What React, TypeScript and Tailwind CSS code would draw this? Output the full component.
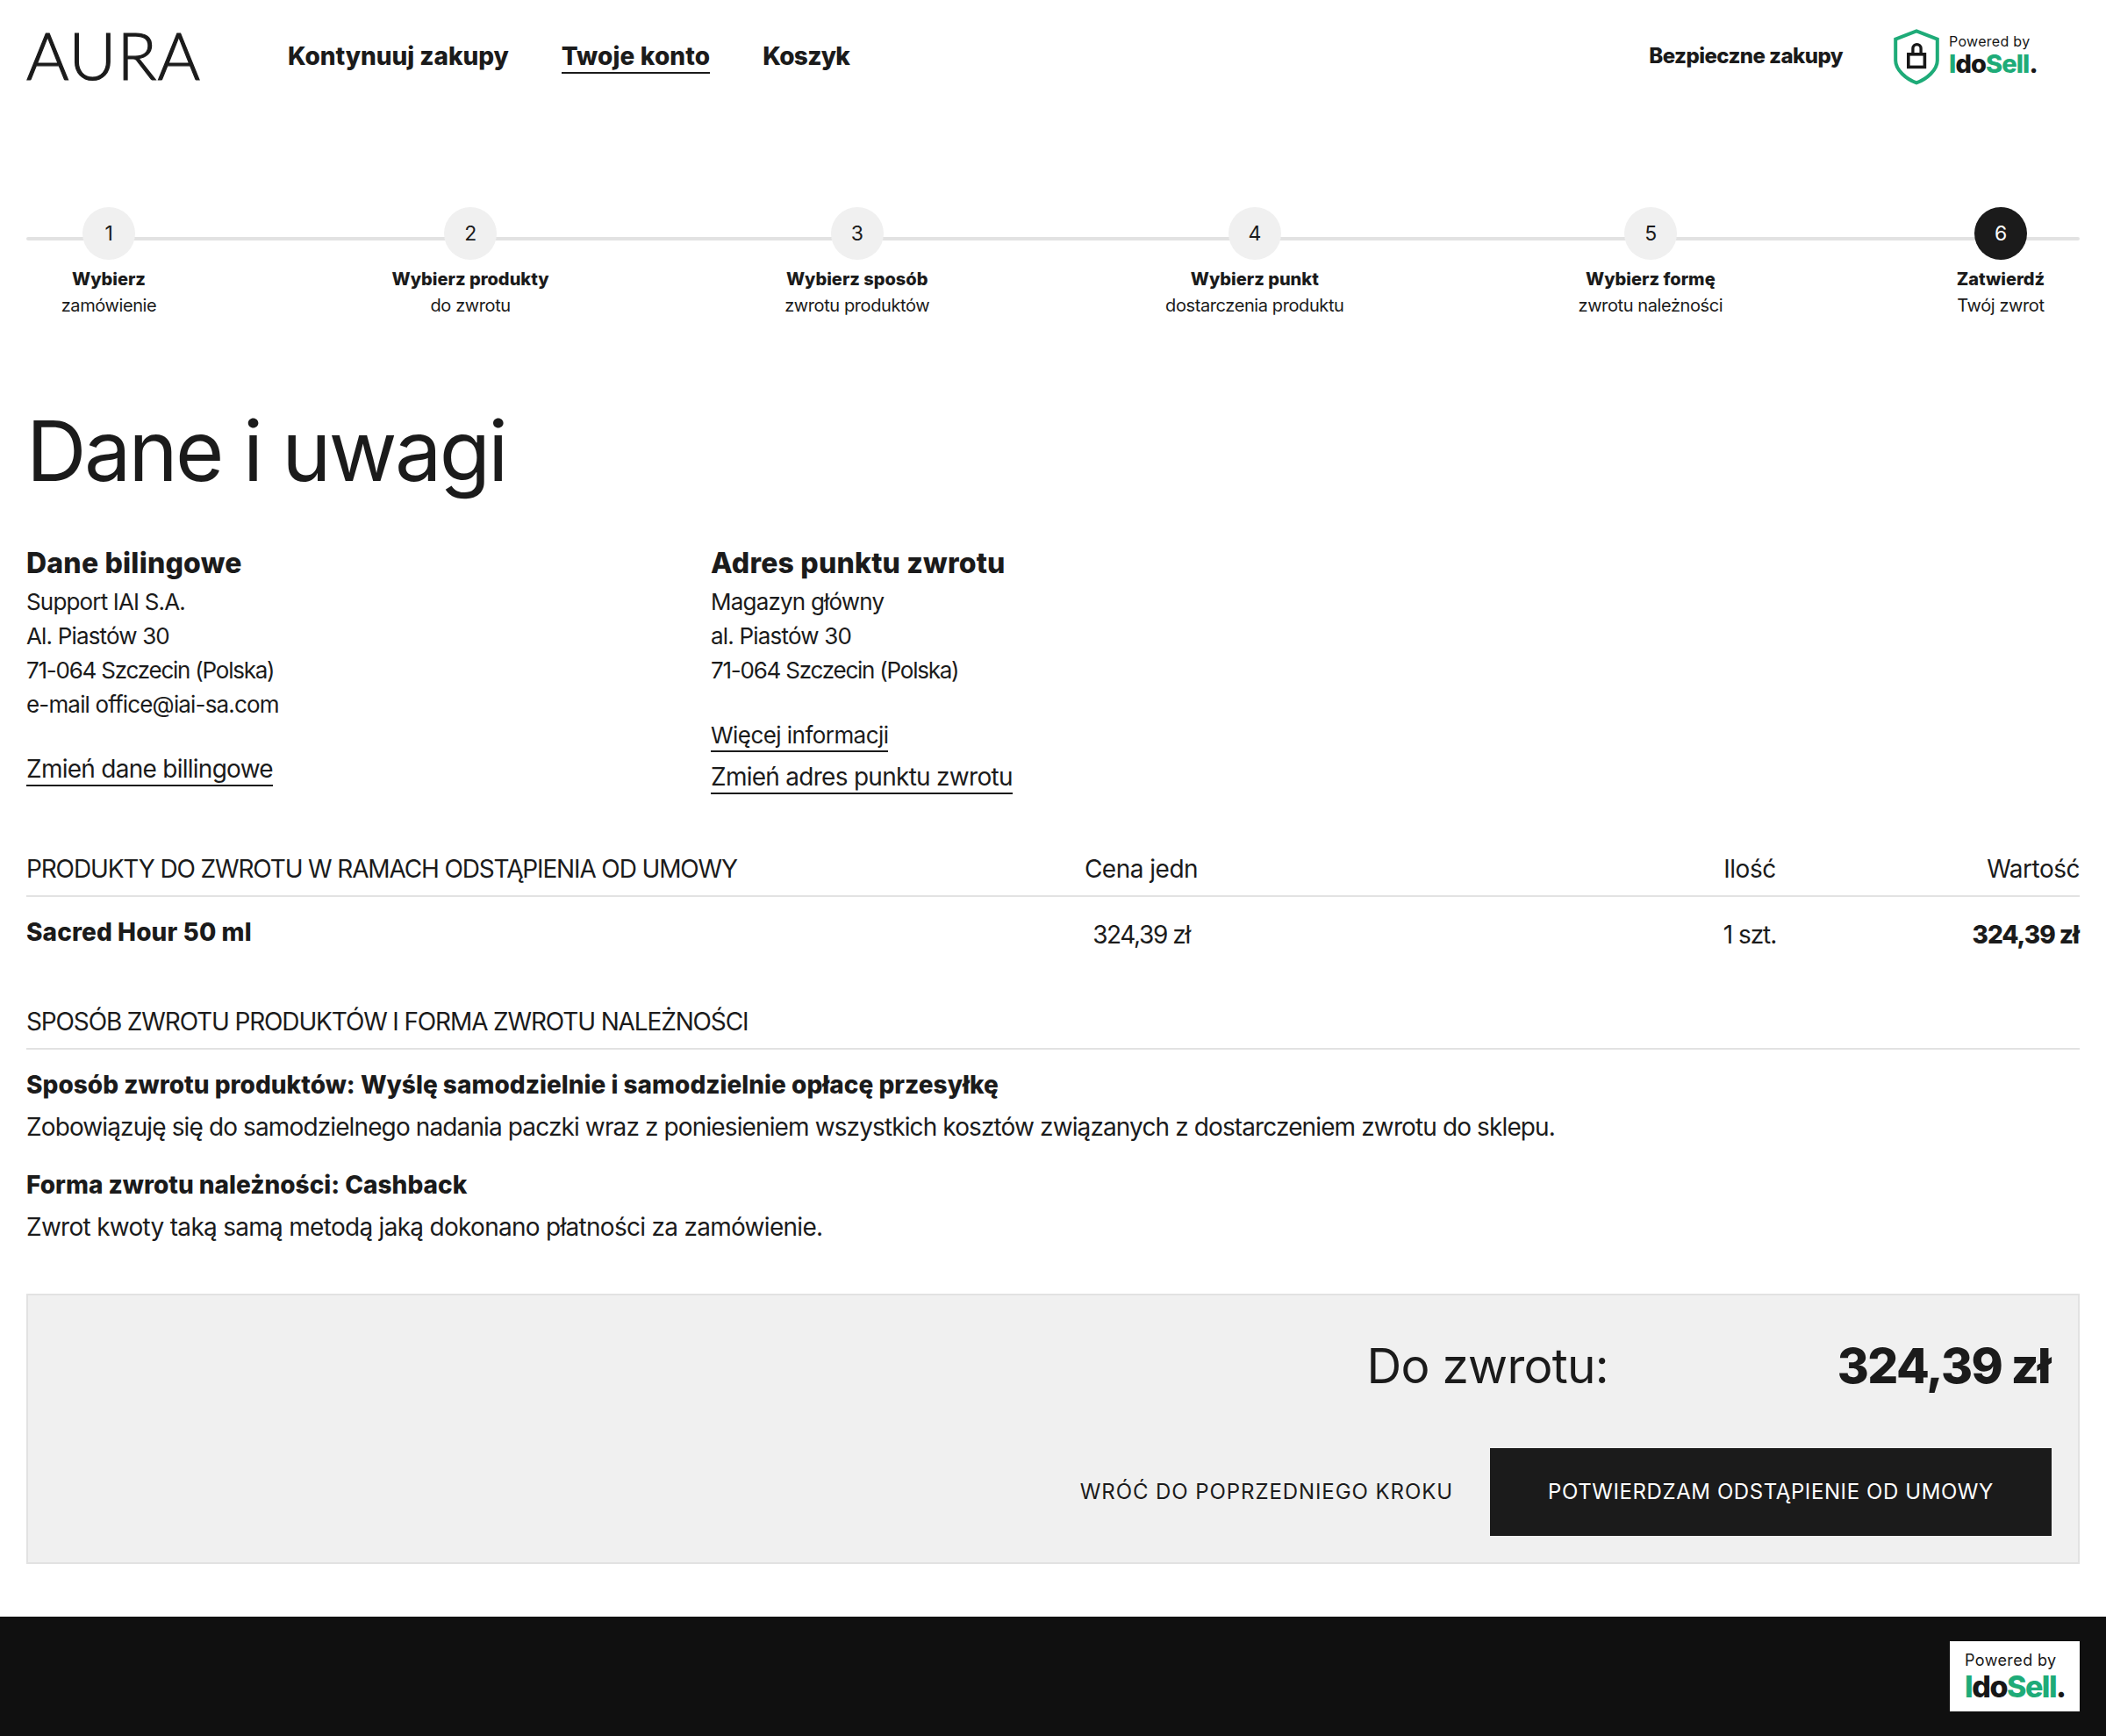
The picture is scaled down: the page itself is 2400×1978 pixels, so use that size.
import clsx from "clsx";

const steps = [
  { title: "Wybierz", text: "zamówienie", width: "w-[188px]" },
  { title: "Wybierz produkty", text: "do zwrotu", width: "w-[259px]" },
  { title: "Wybierz sposób", text: "zwrotu produktów", width: "w-[245px]" },
  { title: "Wybierz punkt", text: "dostarczenia produktu", width: "w-[284px]" },
  { title: "Wybierz formę", text: "zwrotu należności", width: "w-[241px]" },
  { title: "Zatwierdź", text: "Twój zwrot", width: "w-[180px]" },
];

const CURRENT_STEP = 6;

function ShieldIcon() {
  return (
    <svg className="h-16 w-[52px] shrink-0" viewBox="0 0 52 64" fill="none" aria-hidden>
      <path
        d="M26 2.4 49.8 11.6V36C49.8 46.5 38 57 26 61.4 14 57 2.2 46.5 2.2 36V11.6Z"
        stroke="#1eab78"
        strokeWidth="4"
      />
      <path d="M21.9 28V22.2a4.6 4.6 0 0 1 9.2 0V28" stroke="#171717" strokeWidth="3.3" />
      <rect x="16.8" y="28.8" width="18.6" height="14.6" stroke="#171717" strokeWidth="3.6" />
    </svg>
  );
}

function IdoSellName({ className }: { className: string }) {
  return (
    <span className={clsx("font-extrabold text-[#171717]", className)}>
      <span className="text-[#1eab78]">I</span>do<span className="text-[#1eab78]">Sell</span>.
    </span>
  );
}

function Header() {
  return (
    <header className="flex h-[130px] items-center pr-[30px] pl-[30px]">
      <a
        href="#"
        className="w-[298px] pb-1 font-['Lato',sans-serif] text-[74px] leading-[74px] font-light tracking-[1.1px] [-webkit-text-stroke:1.2px_#1b1b1b]"
      >
        AURA
      </a>
      <nav className="flex gap-[60px] text-[28px] leading-9 font-extrabold">
        <a href="#" className="border-b-2 border-transparent tracking-[-0.05px]">
          Kontynuuj zakupy
        </a>
        <a href="#" className="border-b-2 border-[#1b1b1b] tracking-[0.13px]">
          Twoje konto
        </a>
        <a href="#" className="border-b-2 border-transparent tracking-[-0.7px]">
          Koszyk
        </a>
      </nav>
      <p className="ml-auto pb-[3px] text-2xl leading-9 font-extrabold tracking-[-0.56px]">
        Bezpieczne zakupy
      </p>
      <div className="ml-[58px] flex w-[212px] items-center gap-[11px]">
        <ShieldIcon />
        <div className="flex flex-col gap-px pb-[3px] text-[#171717]">
          <span className="text-[16px] leading-[18px] tracking-[0.3px]">Powered by</span>
          <IdoSellName className="text-[29px] leading-8 tracking-[-0.9px]" />
        </div>
      </div>
    </header>
  );
}

function Steps() {
  return (
    <ol className="relative mt-[106px] flex justify-between before:absolute before:inset-x-0 before:top-[34px] before:h-1 before:rounded-full before:bg-[#e2e2e2]">
      {steps.map((step, index) => (
        <li
          key={step.title}
          className={clsx("relative flex flex-col items-center text-xl leading-[30px]", step.width)}
        >
          <span
            className={clsx(
              "mb-[7px] flex size-[60px] items-center justify-center rounded-full text-[23px] tracking-[-0.5px]",
              index + 1 === CURRENT_STEP ? "bg-[#1b1b1b] text-white" : "bg-[#f0f0f0]",
            )}
          >
            {index + 1}
          </span>
          <strong className="font-extrabold">{step.title}</strong>
          <span className="tracking-[-0.4px]">{step.text}</span>
        </li>
      ))}
    </ol>
  );
}

function Addresses() {
  return (
    <div className="mt-12 grid grid-cols-3">
      <div>
        <h2 className="mb-1 text-[32px] leading-10 font-extrabold tracking-[0.2px]">Dane bilingowe</h2>
        <div className="text-[26px] leading-[39px] tracking-[-0.84px]">
          <p>Support IAI S.A.</p>
          <p>Al. Piastów 30</p>
          <p className="tracking-[-1.23px]">71-064 Szczecin (Polska)</p>
          <p>e-mail office@iai-sa.com</p>
        </div>
        <a
          href="#"
          className="mt-9 inline-block border-b-2 border-[#1b1b1b] text-[28px] leading-9 tracking-[-0.73px]"
        >
          Zmień dane billingowe
        </a>
      </div>
      <div className="flex flex-col items-start">
        <h2 className="mb-1 text-[32px] leading-10 font-extrabold tracking-[0.2px]">Adres punktu zwrotu</h2>
        <div className="text-[26px] leading-[39px] tracking-[-0.8px]">
          <p>Magazyn główny</p>
          <p>al. Piastów 30</p>
          <p className="tracking-[-1.23px]">71-064 Szczecin (Polska)</p>
        </div>
        <a
          href="#"
          className="mt-[37px] border-b-2 border-[#1b1b1b] text-[26px] leading-[35px] tracking-[-0.55px]"
        >
          Więcej informacji
        </a>
        <a
          href="#"
          className="mt-2.5 border-b-2 border-[#1b1b1b] text-[28px] leading-9 tracking-[-0.72px]"
        >
          Zmień adres punktu zwrotu
        </a>
      </div>
    </div>
  );
}

function Products() {
  return (
    <section className="mt-16 text-[28px] leading-[42px] whitespace-nowrap">
      <div className="grid grid-cols-[880px_781px_506px_1fr] border-b-2 border-[#e2e2e2] pb-[9px] tracking-[-0.5px]">
        <span className="tracking-[-1.14px]">PRODUKTY DO ZWROTU W RAMACH ODSTĄPIENIA OD UMOWY</span>
        <span className="text-center">Cena jedn</span>
        <span className="pl-[100px] text-center">Ilość</span>
        <span className="text-right">Wartość</span>
      </div>
      <div className="grid grid-cols-[880px_781px_506px_1fr] pt-[19px]">
        <strong className="font-extrabold tracking-[0.1px]">Sacred Hour 50 ml</strong>
        <span className="pt-[3px] text-center tracking-[-1.4px]">324,39 zł</span>
        <span className="pt-[3px] pl-[100px] text-center tracking-[-1.04px]">1 szt.</span>
        <strong className="pt-[3px] pr-px text-right font-extrabold tracking-[-1.02px]">324,39 zł</strong>
      </div>
    </section>
  );
}

function ReturnMethod() {
  return (
    <section className="mt-[57px] text-[28px] leading-[42px]">
      <h3 className="border-b-2 border-[#e2e2e2] pb-[9px] tracking-[-1.14px]">
        SPOSÓB ZWROTU PRODUKTÓW I FORMA ZWROTU NALEŻNOŚCI
      </h3>
      <p className="mt-[19px] font-extrabold tracking-[0.02px]">
        Sposób zwrotu produktów: Wyślę samodzielnie i samodzielnie opłacę przesyłkę
      </p>
      <p className="mt-1.5 tracking-[-0.88px]">
        Zobowiązuję się do samodzielnego nadania paczki wraz z poniesieniem wszystkich kosztów związanych z
        dostarczeniem zwrotu do sklepu.
      </p>
      <p className="mt-6 font-extrabold">Forma zwrotu należności: Cashback</p>
      <p className="mt-1.5 tracking-[-0.71px]">
        Zwrot kwoty taką samą metodą jaką dokonano płatności za zamówienie.
      </p>
    </section>
  );
}

function Summary() {
  return (
    <section className="mt-[55px] border-2 border-[#e2e2e2] bg-[#f0f0f0] px-[30px] pt-[38px] pb-[30px]">
      <div className="flex justify-end gap-[261px] pr-0.5 text-[55px] leading-[84px]">
        <span className="tracking-[-0.75px]">Do zwrotu:</span>
        <strong className="font-extrabold tracking-[-1.6px]">324,39 zł</strong>
      </div>
      <div className="mt-[52px] flex items-center justify-end gap-[42px] text-2xl">
        <button type="button" className="tracking-[0.92px]">
          WRÓĆ DO POPRZEDNIEGO KROKU
        </button>
        <button type="button" className="h-[100px] w-[640px] bg-[#1b1b1b] tracking-[0.59px] text-white">
          POTWIERDZAM ODSTĄPIENIE OD UMOWY
        </button>
      </div>
    </section>
  );
}

export default function App() {
  return (
    <div className="flex min-h-screen flex-col bg-white font-['Inter',sans-serif] text-[#1b1b1b]">
      <Header />
      <main className="px-[30px]">
        <Steps />
        <h1 className="mt-[91px] text-[95px] leading-[120px] tracking-[-2.65px]">Dane i uwagi</h1>
        <Addresses />
        <Products />
        <ReturnMethod />
        <Summary />
      </main>
      <footer className="mt-[60px] flex flex-1 items-start justify-end bg-[#101010] px-[30px] pt-7">
        <div className="flex h-20 w-[148px] flex-col gap-0.5 bg-white pt-3 pl-[17px] whitespace-nowrap text-[#171717]">
          <span className="text-[18px] leading-5 tracking-[0.4px]">Powered by</span>
          <IdoSellName className="text-[34px] leading-9 tracking-[-1.5px]" />
        </div>
      </footer>
    </div>
  );
}
